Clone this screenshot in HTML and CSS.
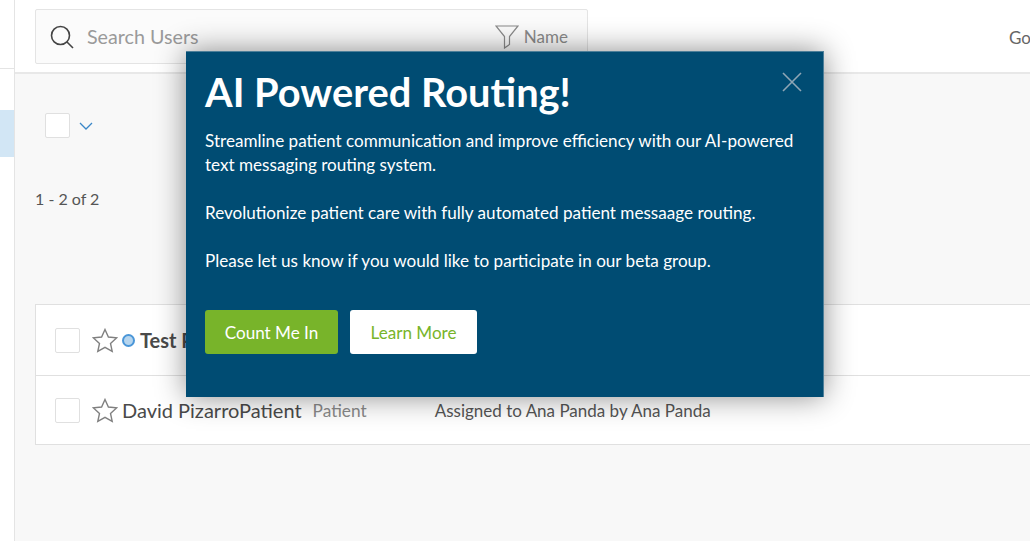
FILE: index.html
```html
<!DOCTYPE html>
<html lang="en">

<head>
    <meta charset="UTF-8">
    <meta name="viewport" content="width=device-width, initial-scale=1.0">
    <title>Users</title>
    <link rel="stylesheet" href="styles.css">
</head>

<body>
    <aside class="sidebar">
        <div class="sidebar-top"></div>
        <div class="sidebar-active"></div>
    </aside>

    <main class="main">
        <header class="topbar">
            <div class="search">
                <svg class="search-icon" width="26" height="26" viewBox="0 0 26 26" fill="none" stroke="#444" stroke-width="1.6">
                    <circle cx="11.5" cy="11.5" r="9"/>
                    <path d="M18 18l6 6"/>
                </svg>
                <span class="search-text">Search Users</span>
                <svg class="filter-icon" width="24" height="24" viewBox="0 0 24 24" fill="none" stroke="#8a8a8a" stroke-width="1.2">
                    <path d="M1 1h22l-8.500 10.500v8l-5 3.500v-11.500z"/>
                </svg>
                <span class="filter-text">Name</span>
            </div>
            <span class="topbar-link">Go</span>
        </header>

        <section class="content">
            <div class="bulk">
                <span class="checkbox"></span>
                <svg class="chevron" width="14" height="8" viewBox="0 0 14 8" fill="none" stroke="#3a87c8" stroke-width="1.3">
                    <path d="M1 1l6 6 6-6"/>
                </svg>
            </div>
            <div class="count">1 - 2 of 2</div>

            <div class="list">
                <div class="row row-first">
                    <span class="checkbox"></span>
                    <svg class="star" width="26" height="25" viewBox="0 0 26 25" fill="none" stroke="#808080" stroke-width="1.4">
                        <path d="M13 1.500l3.400 7.500 8.100.9-6 5.500 1.700 8-7.200-4.100-7.200 4.100 1.700-8-6-5.500 8.100-.9z"/>
                    </svg>
                    <span class="status-dot"></span>
                    <span class="name name-bold">Test P</span>
                </div>
                <div class="row row-second">
                    <span class="checkbox"></span>
                    <svg class="star" width="26" height="25" viewBox="0 0 26 25" fill="none" stroke="#808080" stroke-width="1.4">
                        <path d="M13 1.500l3.400 7.500 8.100.9-6 5.500 1.700 8-7.200-4.100-7.200 4.100 1.700-8-6-5.500 8.100-.9z"/>
                    </svg>
                    <span class="name">David PizarroPatient</span>
                    <span class="role">Patient</span>
                    <span class="assigned">Assigned to Ana Panda by Ana Panda</span>
                </div>
            </div>
        </section>
    </main>

    <div class="modal">
        <button class="modal-close" aria-label="Close">
            <svg width="22" height="22" viewBox="0 0 22 22" fill="none" stroke="#8fa6b5" stroke-width="1.600">
                <path d="M2 2l18 18M20 2L2 20"/>
            </svg>
        </button>
        <h1 class="modal-title">AI Powered Routing!</h1>
        <p class="modal-text">Streamline patient communication and improve efficiency with our AI-powered text messaging routing system.</p>
        <p class="modal-text">Revolutionize patient care with fully automated patient messaage routing.</p>
        <p class="modal-text">Please let us know if you would like to participate in our beta group.</p>
        <div class="modal-actions">
            <button class="btn btn-green">Count Me In</button>
            <button class="btn btn-white">Learn More</button>
        </div>
    </div>
</body>

</html>
```

FILE: styles.css
```css
body {
    font-family: Lato, 'Open Sans', sans-serif;
    margin: 0;
    height: 541px;
    display: flex;
    overflow: hidden;
    background-color: #f8f8f8;
    color: #444;
}

.sidebar {
    width: 14px;
    flex-shrink: 0;
    background: white;
    border-right: 1px solid #e4e4e4;
}

.sidebar-top {
    height: 68px;
    border-bottom: 1px solid #e4e4e4;
}

.sidebar-active {
    height: 47px;
    margin-top: 41px;
    background-color: #d2e6f5;
}

.main {
    flex: 1;
    min-width: 0;
}

.topbar {
    height: 72px;
    display: flex;
    justify-content: space-between;
    align-items: flex-start;
    padding-left: 20px;
    background: white;
    border-bottom: 2px solid #e8e8e8;
    box-sizing: content-box;
}

.search {
    width: 551px;
    height: 53px;
    margin-top: 9px;
    display: flex;
    align-items: center;
    background: #fbfbfb;
    border: 1px solid #e4e4e4;
    border-radius: 2px;
}

.search-icon {
    margin-left: 13px;
}

.search-text {
    margin-left: 12px;
    font-size: 19.700px;
    color: #9a9a9a;
}

.filter-icon {
    margin-left: auto;
}

.filter-text {
    margin: 0 19px 0 5px;
    font-size: 17px;
    color: #8a8a8a;
}

.topbar-link {
    margin: 27px 0 0 0;
    width: 21px;
    overflow: hidden;
    font-size: 17px;
    color: #666;
}

.content {
    padding-left: 20px;
}

.bulk {
    display: flex;
    align-items: center;
    gap: 9px;
    padding: 39px 0 0 10px;
}

.checkbox {
    width: 23px;
    height: 23px;
    flex-shrink: 0;
    display: block;
    background: white;
    border: 1px solid #e0e0e0;
    border-radius: 2px;
}

.count {
    margin-top: 51px;
    font-size: 16px;
    line-height: 20px;
    color: #555;
}

.list {
    margin-top: 95px;
    background: white;
    border: 1px solid #e0e0e0;
    border-right: none;
}

.row {
    display: flex;
    align-items: center;
    padding-left: 19px;
}

.row-first {
    height: 70px;
    border-bottom: 1px solid #e0e0e0;
}

.row-second {
    height: 68px;
}

.star {
    margin-left: 12px;
    flex-shrink: 0;
}

.status-dot {
    width: 9px;
    height: 9px;
    margin-left: 4px;
    background-color: #b6d5ee;
    border: 2px solid #4a96d8;
    border-radius: 50%;
}

.name {
    margin-left: 4px;
    font-size: 20px;
    color: #4a4a4a;
}

.name-bold {
    margin-left: 5px;
    font-weight: bold;
}

.role {
    margin-left: 11px;
    font-size: 17.300px;
    color: #8a8a8a;
}

.assigned {
    margin-left: 68px;
    font-size: 17px;
    color: #555;
}

.modal {
    position: absolute;
    left: 186px;
    top: 51px;
    width: 638px;
    height: 346px;
    padding: 15px 19px 0;
    box-sizing: border-box;
    background-color: #004c73;
    border: 1px solid #4d7f99;
    border-width: 1px 1px 0 0;
    box-shadow: 0 0 28px rgba(0, 0, 0, 0.45);
    color: white;
}

.modal-close {
    position: absolute;
    right: 20px;
    top: 19px;
    padding: 0;
    border: none;
    background: none;
    line-height: 0;
}

.modal-title {
    margin: 0 0 12px;
    font-size: 39.800px;
    line-height: 50px;
    font-weight: bold;
}

.modal-text {
    margin: 0 0 24px;
    font-size: 17.100px;
    line-height: 24px;
}

.modal-actions {
    display: flex;
    gap: 12px;
    margin-top: 37px;
}

.btn {
    height: 44px;
    padding: 0;
    font-family: inherit;
    font-size: 17.100px;
    border: none;
    border-radius: 3px;
}

.btn-green {
    width: 133px;
    background-color: #78b42a;
    color: white;
}

.btn-white {
    width: 127px;
    background: white;
    color: #78b42a;
}
```
